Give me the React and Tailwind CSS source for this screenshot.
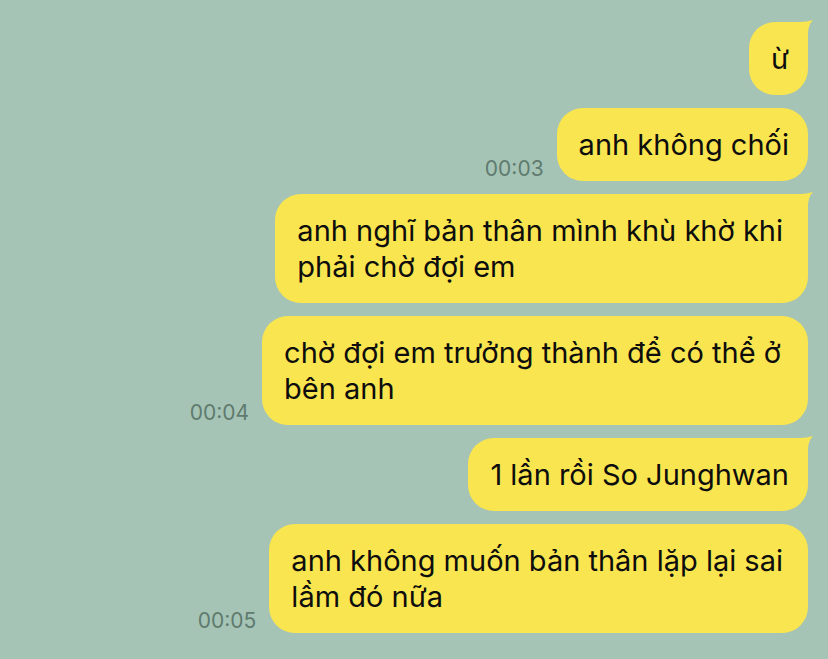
import React from "react";

function Tail() {
  return (
    <svg
      className="absolute right-[-6px] top-[-2px] overflow-visible"
      width="34"
      height="30"
      viewBox="0 0 34 30"
    >
      <path d="M0 2 L20 2 Q27 2 33 0 Q28 5 28 14 L28 30 L0 30 Z" fill="#f9e54f" />
    </svg>
  );
}

function Bubble({ lines, tail, pr }) {
  return (
    <div
      className={`relative rounded-[26px] bg-[#f9e54f] pl-[22px] py-[18.5px] text-[29px] leading-[36px] text-[#0d0d0d] whitespace-nowrap ${pr}`}
    >
      {tail && <Tail />}
      <span className="relative">
        {lines.map((l, i) => (
          <React.Fragment key={i}>
            {i > 0 && <br />}
            {l}
          </React.Fragment>
        ))}
      </span>
    </div>
  );
}

function Row({ time, lines, tail, pr = "pr-[19px]" }) {
  return (
    <div className="flex items-end justify-end gap-[13px]">
      {time && (
        <span className="mb-[1px] text-[21px] leading-[22px] text-[#5f7b6f]">{time}</span>
      )}
      <Bubble lines={lines} tail={tail} pr={pr} />
    </div>
  );
}

export default function App() {
  return (
    <div
      className="min-h-[659px] w-[828px] bg-[#a6c4b5] pt-[22px] pr-[20px] flex flex-col gap-[13px]"
      style={{ fontFamily: "Inter, 'Noto Sans', sans-serif" }}
    >
      <Row lines={["ừ"]} tail />
      <Row time="00:03" lines={["anh không chối"]} />
      <Row lines={["anh nghĩ bản thân mình khù khờ khi", "phải chờ đợi em"]} tail pr="pr-[25px]" />
      <Row time="00:04" lines={["chờ đợi em trưởng thành để có thể ở", "bên anh"]} pr="pr-[27px]" />
      <Row lines={["1 lần rồi So Junghwan"]} tail />
      <Row time="00:05" lines={["anh không muốn bản thân lặp lại sai", "lầm đó nữa"]} pr="pr-[25px]" />
    </div>
  );
}
